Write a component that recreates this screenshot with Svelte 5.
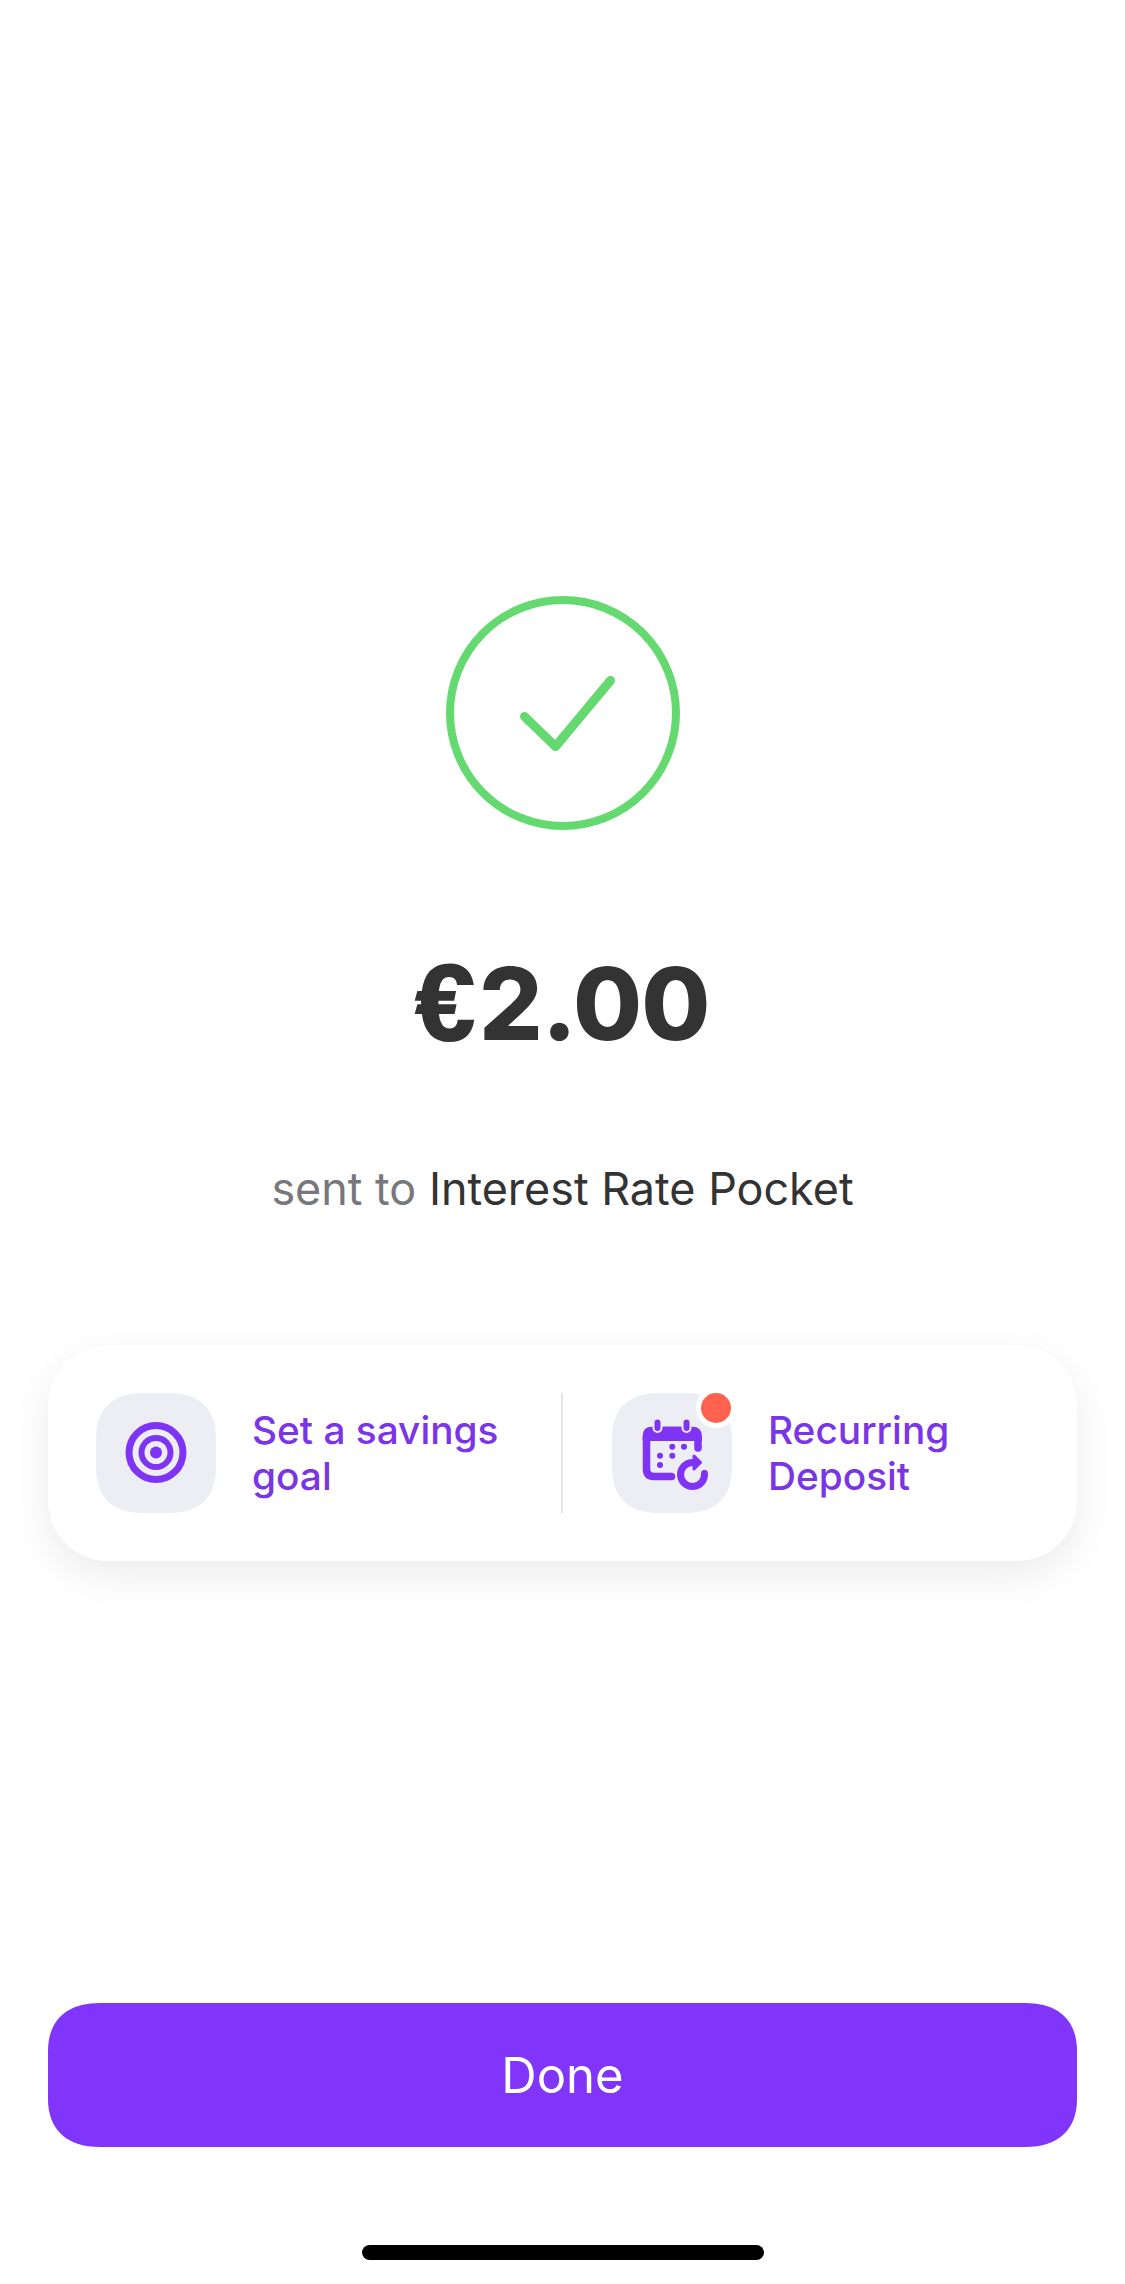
<script>
  const actions = [
    { id: 'goal', lines: ['Set a savings', 'goal'] },
    { id: 'recurring', lines: ['Recurring', 'Deposit'] }
  ];
</script>

<main class="screen">
  <svg class="success" viewBox="0 0 234 234" aria-hidden="true">
    <circle cx="117" cy="117" r="113" />
    <path class="tick" d="M78.5 120.5 L109.5 150.5 L164.5 84.5" />
  </svg>

  <h1 class="amount"><span class="euro">€</span>2.00</h1>
  <p class="recipient"><span class="muted">sent to</span> Interest Rate Pocket</p>

  <section class="card">
    {#each actions as action, i}
      {#if i > 0}<div class="divider"></div>{/if}
      <div class="action" class:second={i > 0}>
        <div class="tile-wrap">
          <div class="tile">
            {#if action.id === 'goal'}
              <svg viewBox="0 0 120 120" aria-hidden="true">
                <circle class="fill" cx="60" cy="59.5" r="30.5" />
                <circle class="bg" cx="60" cy="59.5" r="23.5" />
                <circle class="fill" cx="60" cy="59.5" r="17.5" />
                <circle class="bg" cx="60" cy="59.5" r="11.5" />
                <circle class="fill" cx="60" cy="59.5" r="6" />
              </svg>
            {:else}
              <svg viewBox="0 0 120 120" aria-hidden="true">
                <path class="cal" d="M59.5 83.5 H42 Q34.5 83.5 34.5 76 V45 Q34.5 37.5 42 37.5 H78.5 Q86 37.5 86 45 V55" />
                <path class="band" d="M30.7 48 V43 Q30.7 33.7 40 33.7 H80 Q89.8 33.7 89.8 43 V48 Z" />
                <path class="halo" d="M45.5 29.5 V35 M74.5 29.5 V35" />
                <path class="peg" d="M45.5 29.5 V35 M74.5 29.5 V35" />
                <circle class="fill" cx="60.3" cy="53.7" r="3" />
                <circle class="fill" cx="72" cy="53.7" r="3" />
                <circle class="fill" cx="48" cy="62.7" r="3" />
                <circle class="fill" cx="60.3" cy="62.7" r="3" />
                <circle class="fill" cx="48" cy="72" r="3" />
                <path class="arc" d="M92.5 80.5 A12 12 0 1 1 80.5 69.5" />
                <path class="head" d="M82 63 L88.5 69.5 L82 76 Z" />
              </svg>
            {/if}
          </div>
          {#if action.id === 'recurring'}<span class="badge"></span>{/if}
        </div>
        <div class="label">
          {#each action.lines as line}<span>{line}</span>{/each}
        </div>
      </div>
    {/each}
  </section>

  <button class="done">Done</button>
  <div class="home"></div>
</main>

<style>
  :global(body) {
    margin: 0;
    background: #fff;
  }
  .screen {
    height: 2284px;
    display: flex;
    flex-direction: column;
    align-items: center;
    font-family: Inter, "Liberation Sans", sans-serif;
    color: #333;
    overflow: hidden;
  }
  .success {
    width: 234px;
    height: 234px;
    margin-top: 596px;
    flex: none;
  }
  .success circle,
  .success path {
    fill: none;
    stroke: #64d96f;
    stroke-width: 8;
    stroke-linecap: round;
    stroke-linejoin: round;
  }
  .success .tick {
    stroke-width: 9;
  }
  .amount {
    margin: 114px 0 0;
    font-size: 100px;
    line-height: 120px;
    font-weight: 800;
    letter-spacing: -1px;
  }
  .euro {
    font-family: "Liberation Sans", sans-serif;
    font-size: 107px;
    line-height: 100px;
    font-weight: 700;
    -webkit-text-stroke: 2px #333;
    margin-right: 5px;
  }
  .recipient {
    margin: 97px 0 0;
    font-size: 44.9px;
    line-height: 56px;
    font-weight: 400;
  }
  .muted {
    color: #77777c;
  }
  .card {
    box-sizing: border-box;
    width: 1029px;
    height: 216px;
    margin-top: 128px;
    padding: 48px 0;
    display: flex;
    border-radius: 60px;
    background: #fff;
    box-shadow: 0 14px 42px rgba(0, 0, 0, 0.08);
    flex: none;
  }
  .action {
    flex: 1 1 0;
    display: flex;
    align-items: center;
    gap: 36px;
    padding-left: 48px;
    min-width: 0;
  }
  .action.second {
    padding-left: 49px;
  }
  .divider {
    width: 2px;
    background: #e6e6e9;
    flex: none;
  }
  .tile-wrap {
    position: relative;
    width: 120px;
    height: 120px;
    flex: none;
  }
  .tile {
    width: 120px;
    height: 120px;
    background: #eceef3;
    clip-path: path("M46 0 H74 C104 0 120 16 120 46 V74 C120 104 104 120 74 120 H46 C16 120 0 104 0 74 V46 C0 16 16 0 46 0 Z");
  }
  .tile svg {
    display: block;
    width: 120px;
    height: 120px;
  }
  .fill {
    fill: #7f33f5;
  }
  .bg {
    fill: #eceef3;
  }
  .cal,
  .arc {
    fill: none;
    stroke: #7f33f5;
    stroke-width: 7.5;
    stroke-linecap: round;
  }
  .arc {
    stroke-width: 7;
  }
  .band {
    fill: #7f33f5;
  }
  .halo {
    fill: none;
    stroke: #eceef3;
    stroke-width: 10;
    stroke-linecap: round;
  }
  .peg {
    fill: none;
    stroke: #7f33f5;
    stroke-width: 6;
    stroke-linecap: round;
  }
  .head {
    fill: #7f33f5;
    stroke: #7f33f5;
    stroke-width: 3;
    stroke-linejoin: round;
  }
  .badge {
    position: absolute;
    left: 89px;
    top: 0;
    width: 30px;
    height: 30px;
    border-radius: 50%;
    background: #ff6350;
    box-shadow: 0 0 0 5px #fff;
  }
  .label {
    display: flex;
    flex-direction: column;
    font-size: 38.8px;
    line-height: 46px;
    font-weight: 450;
    color: #7a35e6;
    white-space: nowrap;
  }
  .done {
    width: 1029px;
    height: 144px;
    margin-top: auto;
    border: 0;
    padding: 0;
    flex: none;
    background: #8135fb;
    color: #fff;
    font-family: inherit;
    font-size: 49px;
    font-weight: 400;
    clip-path: path("M52 0 H977 C1011 0 1029 18 1029 48 V96 C1029 126 1011 144 977 144 H52 C18 144 0 126 0 96 V48 C0 18 18 0 52 0 Z");
  }
  .home {
    width: 402px;
    height: 15px;
    margin: 98px 0 24px;
    border-radius: 8px;
    background: #000;
    flex: none;
  }
</style>
